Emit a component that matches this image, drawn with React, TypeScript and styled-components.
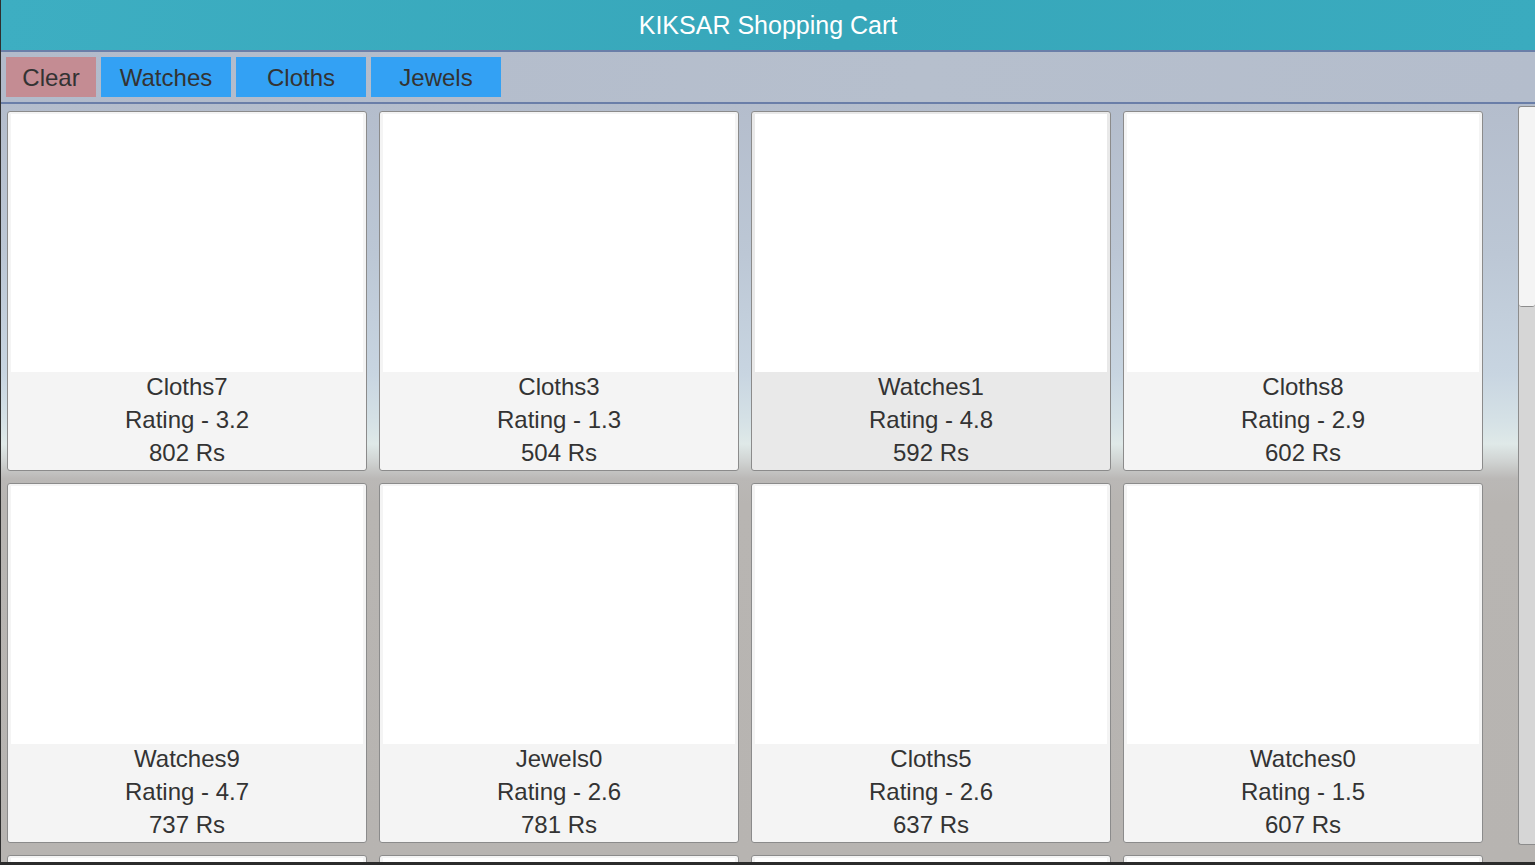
import React from "react";
import styled, { createGlobalStyle } from "styled-components";

const GlobalStyle = createGlobalStyle`
  html, body { margin: 0; padding: 0; overflow: hidden; }
  body { font-family: "Liberation Sans", Arial, sans-serif; }
`;

const Page = styled.div`
  width: 1535px;
  height: 865px;
  box-sizing: border-box;
  border-left: 1px solid #2f2f2f;
  border-bottom: 3px solid #2b2b2b;
  display: flex;
  flex-direction: column;
  overflow: hidden;
`;

const Header = styled.header`
  height: 50px;
  flex: none;
  display: flex;
  align-items: center;
  justify-content: center;
  background: linear-gradient(100deg, #3daec2 0%, #37a7ba 55%, #3aabbf 100%);
  border-bottom: 2px solid #6a7ea8;
  color: #ffffff;
  font-size: 25px;
`;

const Toolbar = styled.nav`
  height: 52px;
  flex: none;
  box-sizing: border-box;
  display: flex;
  gap: 5px;
  padding: 5px 5px;
  background: linear-gradient(100deg, #b2bbcb 0%, #b6bfcd 60%, #b4bdcc 100%);
  border-bottom: 2px solid #6a7ea8;
`;

const FilterButton = styled.button<{ $clear?: boolean; $w: number }>`
  width: ${(p) => p.$w}px;
  height: 40px;
  border: none;
  margin: 0;
  padding: 2px 0 0 0;
  background: ${(p) => (p.$clear ? "#c48c93" : "#33a1f4")};
  color: #333333;
  font-family: "Liberation Sans", Arial, sans-serif;
  font-size: 24px;
`;

const Body = styled.main`
  flex: 1;
  display: flex;
  overflow: hidden;
  background: linear-gradient(
    180deg,
    #b4bdcc 0px,
    #bcc7d5 150px,
    #c8d5e1 270px,
    #d6e2e6 320px,
    #dfe9e8 340px,
    #cfd2d1 358px,
    #bab8b6 375px,
    #b8b5b2 400px,
    #b7b4b1 100%
  );
`;

const Grid = styled.div`
  display: grid;
  grid-template-columns: repeat(4, 360px);
  grid-auto-rows: 360px;
  gap: 12px;
  padding: 7px 0 0 6px;
  align-content: start;
`;

const Card = styled.div<{ $active?: boolean }>`
  box-sizing: border-box;
  border: 1px solid #8b8b8b;
  border-radius: 3px;
  background: ${(p) => (p.$active ? "#e9e9e9" : "#f4f4f4")};
  padding: 2px 3px 0 3px;
  display: flex;
  flex-direction: column;
  overflow: hidden;
`;

const Picture = styled.div`
  height: 258px;
  flex: none;
  background: #ffffff;
  position: relative;
  z-index: 1;
`;

const Info = styled.div`
  flex: 1;
  display: flex;
  flex-direction: column;
  justify-content: flex-start;
  align-items: center;
  margin-top: -2px;
  color: #333333;
  font-size: 24px;
`;

const Line = styled.div`
  height: 33px;
  line-height: 33px;
  flex: none;
`;

const Scrollbar = styled.div`
  margin-left: auto;
  margin-top: 2px;
  width: 17px;
  height: 739px;
  box-sizing: border-box;
  background: #d6d6d6;
  border: 1px solid #8c8c8c;
  border-right: none;
  border-radius: 3px 0 0 3px;
  display: flex;
  flex-direction: column;
`;

const Thumb = styled.div`
  height: 200px;
  box-sizing: border-box;
  background: #f4f4f4;
  border-bottom: 1px solid #8c8c8c;
  border-radius: 3px 0 3px 3px;
`;

type Item = { name: string; rating: string; price: number; active?: boolean };

const items: Item[] = [
  { name: "Cloths7", rating: "3.2", price: 802 },
  { name: "Cloths3", rating: "1.3", price: 504 },
  { name: "Watches1", rating: "4.8", price: 592, active: true },
  { name: "Cloths8", rating: "2.9", price: 602 },
  { name: "Watches9", rating: "4.7", price: 737 },
  { name: "Jewels0", rating: "2.6", price: 781 },
  { name: "Cloths5", rating: "2.6", price: 637 },
  { name: "Watches0", rating: "1.5", price: 607 },
  { name: "Jewels4", rating: "3.1", price: 455 },
  { name: "Cloths1", rating: "4.0", price: 310 },
  { name: "Watches4", rating: "2.2", price: 890 },
  { name: "Jewels7", rating: "3.9", price: 128 },
];

export default function App() {
  return (
    <>
      <GlobalStyle />
      <Page>
        <Header>KIKSAR Shopping Cart</Header>
        <Toolbar>
          <FilterButton $clear $w={90}>Clear</FilterButton>
          <FilterButton $w={130}>Watches</FilterButton>
          <FilterButton $w={130}>Cloths</FilterButton>
          <FilterButton $w={130}>Jewels</FilterButton>
        </Toolbar>
        <Body>
          <Grid>
            {items.map((it) => (
              <Card key={it.name} $active={it.active}>
                <Picture />
                <Info>
                  <Line>{it.name}</Line>
                  <Line>Rating - {it.rating}</Line>
                  <Line>{it.price} Rs</Line>
                </Info>
              </Card>
            ))}
          </Grid>
          <Scrollbar>
            <Thumb />
          </Scrollbar>
        </Body>
      </Page>
    </>
  );
}
